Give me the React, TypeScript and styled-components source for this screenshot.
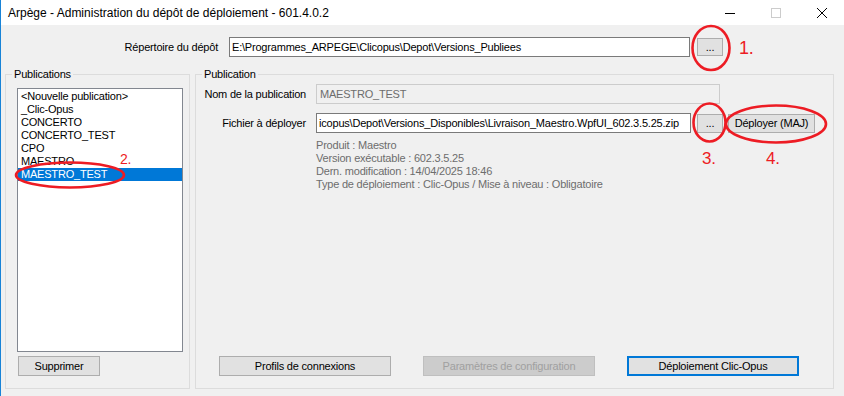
import React from "react";
import styled, { createGlobalStyle } from "styled-components";

const GlobalStyle = createGlobalStyle`
  html, body {
    margin: 0;
    padding: 0;
    background: #f0f0f0;
  }
  body {
    font-family: "Liberation Sans", Arial, sans-serif;
  }
`;

const Window = styled.div`
  position: relative;
  width: 844px;
  height: 396px;
  box-sizing: border-box;
  border-left: 1px solid #1883d7;
  background: #f0f0f0;
  display: flex;
  flex-direction: column;
  overflow: hidden;
  font-family: "Liberation Sans", Arial, sans-serif;
  font-size: 11px;
  letter-spacing: -0.2px;
  color: #000;
`;

const TitleBar = styled.div`
  flex: none;
  height: 25px;
  display: flex;
  align-items: center;
  background: #fff;
`;

const Title = styled.div`
  flex: 1;
  padding-left: 7px;
  font-size: 12px;
  letter-spacing: 0;
  white-space: nowrap;
`;

const Controls = styled.div`
  display: flex;
  height: 100%;
  margin-right: -1px;
`;

const ControlButton = styled.div`
  width: 46px;
  height: 100%;
  display: flex;
  align-items: center;
  justify-content: center;

  svg {
    display: block;
  }
`;

const Body = styled.div`
  flex: 1;
  display: flex;
  flex-direction: column;
  padding: 12px 10px 7px 4px;
`;

const DepotRow = styled.div`
  display: flex;
  align-items: center;
  height: 20px;
`;

const FieldLabel = styled.label<{ $width: number; $gap: number }>`
  flex: none;
  width: ${({ $width }) => $width}px;
  margin-right: ${({ $gap }) => $gap}px;
  text-align: right;
  white-space: nowrap;
`;

const TextBox = styled.input<{ $width: number }>`
  flex: none;
  box-sizing: border-box;
  width: ${({ $width }) => $width}px;
  height: 20px;
  margin: 0;
  padding: 0 2px;
  font: inherit;
  letter-spacing: inherit;
  color: #000;
  background: #fff;
  border: 1px solid #7a7a7a;
  outline: none;

  &:disabled {
    color: #6d6d6d;
    background: #f0f0f0;
    border-color: #cccccc;
    padding-left: 3px;
  }
`;

const Button = styled.button<{ $width: number; $height?: number; $gap?: number; $default?: boolean }>`
  flex: none;
  box-sizing: border-box;
  width: ${({ $width }) => $width}px;
  height: ${({ $height }) => $height ?? 20}px;
  margin: 0 0 0 ${({ $gap }) => $gap ?? 0}px;
  padding: 0;
  font: inherit;
  letter-spacing: inherit;
  color: #000;
  background: #e1e1e1;
  border: ${({ $default }) => ($default ? "2px solid #0078d7" : "1px solid #adadad")};
  white-space: nowrap;

  &:disabled {
    color: #a0a0a0;
    background: #cccccc;
    border-color: #bfbfbf;
  }
`;

const Columns = styled.div`
  display: flex;
  gap: 5px;
  margin-top: 11px;
  height: 321px;
`;

const GroupBox = styled.fieldset<{ $width: number }>`
  box-sizing: border-box;
  width: ${({ $width }) => $width}px;
  height: 100%;
  min-width: 0;
  margin: 0;
  padding: 0;
  border: 1px solid #dcdcdc;
  display: flex;
  flex-direction: column;
`;

const Legend = styled.legend`
  margin-left: 6px;
  padding: 0 2px;
  line-height: 13px;
`;

const ListBox = styled.ul`
  box-sizing: border-box;
  height: 264px;
  margin: 7px 6px 0 11px;
  padding: 1px 0 0;
  list-style: none;
  background: #fff;
  border: 1px solid #828790;
`;

const ListItem = styled.li<{ $selected?: boolean }>`
  height: 13px;
  line-height: 13px;
  padding-left: 3px;
  white-space: nowrap;
  color: ${({ $selected }) => ($selected ? "#fff" : "#000")};
  background: ${({ $selected }) => ($selected ? "#0078d7" : "transparent")};
`;

const LeftFooter = styled.div`
  margin: 4px 0 0 12px;
`;

const PublicationForm = styled.div`
  flex: 1;
  display: flex;
  flex-direction: column;
  padding: 3px 0 12px 8px;
`;

const FormRow = styled.div<{ $top?: number }>`
  display: flex;
  align-items: center;
  height: 20px;
  margin-top: ${({ $top }) => $top ?? 0}px;
`;

const Info = styled.div`
  margin: 6px 0 0 112px;
  line-height: 13px;
  color: #6d6d6d;
  white-space: nowrap;
`;

const ActionRow = styled.div`
  display: flex;
  gap: 32px;
  margin: auto 0 0 15px;
`;

const Annotations = styled.svg`
  position: absolute;
  top: 0;
  left: -1px;
  pointer-events: none;

  ellipse {
    fill: none;
    stroke: #ed1c24;
    stroke-width: 2.6;
  }

  text {
    fill: #ed1c24;
    font-family: "Liberation Sans", Arial, sans-serif;
  }
`;

const publications = [
  "<Nouvelle publication>",
  "_Clic-Opus",
  "CONCERTO",
  "CONCERTO_TEST",
  "CPO",
  "MAESTRO",
  "MAESTRO_TEST",
];

const infoLines = [
  "Produit : Maestro",
  "Version exécutable : 602.3.5.25",
  "Dern. modification : 14/04/2025 18:46",
  "Type de déploiement : Clic-Opus / Mise à niveau : Obligatoire",
];

export default function App() {
  return (
    <>
      <GlobalStyle />
      <Window>
        <TitleBar>
          <Title>Arpège - Administration du dépôt de déploiement - 601.4.0.2</Title>
          <Controls>
            <ControlButton>
              <svg width="10" height="10" viewBox="0 0 10 10">
                <path d="M0 5.5h10" stroke="#000" strokeWidth="1" />
              </svg>
            </ControlButton>
            <ControlButton>
              <svg width="10" height="10" viewBox="0 0 10 10">
                <rect x="0.5" y="0.5" width="9" height="9" fill="none" stroke="#cccccc" />
              </svg>
            </ControlButton>
            <ControlButton>
              <svg width="10" height="10" viewBox="0 0 10 10">
                <path d="M0 0L10 10M10 0L0 10" stroke="#000" strokeWidth="1" />
              </svg>
            </ControlButton>
          </Controls>
        </TitleBar>

        <Body>
          <DepotRow>
            <FieldLabel $width={213} $gap={11}>Répertoire du dépôt</FieldLabel>
            <TextBox $width={461} readOnly value="E:\Programmes_ARPEGE\Clicopus\Depot\Versions_Publiees" />
            <Button $width={26} $height={18} $gap={7}>...</Button>
          </DepotRow>

          <Columns>
            <GroupBox $width={185}>
              <Legend>Publications</Legend>
              <ListBox>
                {publications.map((name) => (
                  <ListItem key={name} $selected={name === "MAESTRO_TEST"}>
                    {name}
                  </ListItem>
                ))}
              </ListBox>
              <LeftFooter>
                <Button $width={82}>Supprimer</Button>
              </LeftFooter>
            </GroupBox>

            <GroupBox $width={639}>
              <Legend>Publication</Legend>
              <PublicationForm>
                <FormRow>
                  <FieldLabel $width={102} $gap={10}>Nom de la publication</FieldLabel>
                  <TextBox $width={404} disabled value="MAESTRO_TEST" />
                </FormRow>
                <FormRow $top={9}>
                  <FieldLabel $width={102} $gap={10}>Fichier à déployer</FieldLabel>
                  <TextBox
                    $width={375}
                    readOnly
                    value="icopus\Depot\Versions_Disponibles\Livraison_Maestro.WpfUI_602.3.5.25.zip"
                  />
                  <Button $width={26} $height={19} $gap={6}>...</Button>
                  <Button $width={87} $height={19} $gap={5}>Déployer (MAJ)</Button>
                </FormRow>
                <Info>
                  {infoLines.map((line) => (
                    <div key={line}>{line}</div>
                  ))}
                </Info>
                <ActionRow>
                  <Button $width={172}>Profils de connexions</Button>
                  <Button $width={172} disabled>Paramètres de configuration</Button>
                  <Button $width={172} $default>Déploiement Clic-Opus</Button>
                </ActionRow>
              </PublicationForm>
            </GroupBox>
          </Columns>
        </Body>

        <Annotations width="844" height="396" viewBox="0 0 844 396">
          <ellipse cx="711" cy="48" rx="18.5" ry="22" />
          <text x="739" y="54" fontSize="18">1.</text>
          <ellipse cx="70" cy="175" rx="54" ry="12.5" />
          <text x="120" y="164" fontSize="14">2.</text>
          <ellipse cx="709.5" cy="122.5" rx="16" ry="19" />
          <text x="702" y="164" fontSize="17">3.</text>
          <ellipse cx="776" cy="124" rx="50" ry="18.5" />
          <text x="766" y="164" fontSize="17">4.</text>
        </Annotations>
      </Window>
    </>
  );
}
